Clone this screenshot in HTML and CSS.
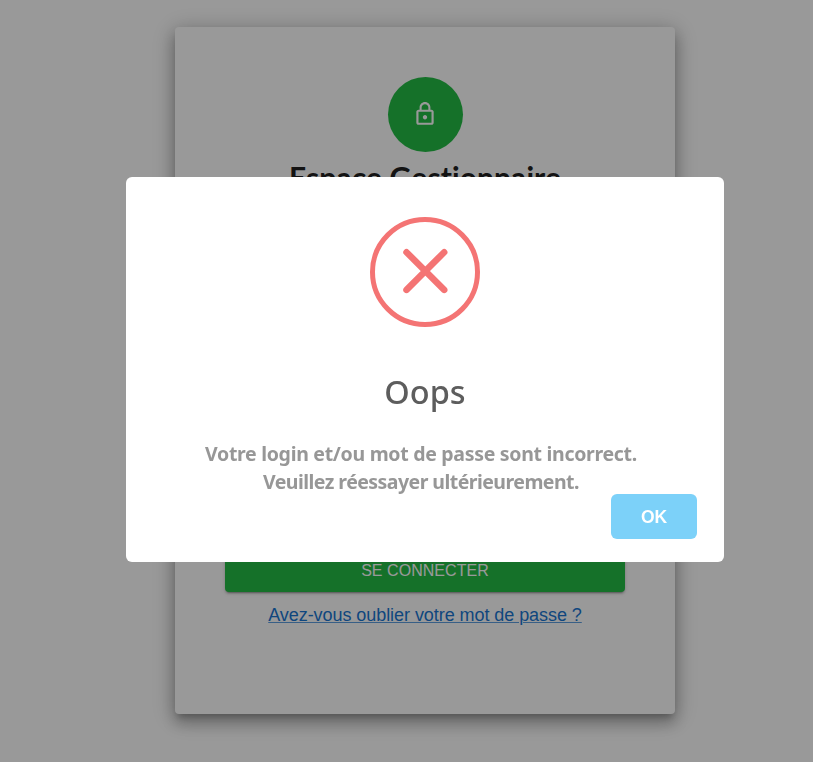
FILE: index.html
```html
<!DOCTYPE html>
<html lang="fr">
<head>
<meta charset="utf-8">
<title>Espace Gestionnaire</title>
<link rel="stylesheet" href="styles.css">
</head>
<body>
<main class="card">
  <div class="avatar">
    <svg width="26" height="26" viewBox="0 0 24 24" fill="currentColor"><path d="M12 17c1.100 0 2-.9 2-2s-.9-2-2-2-2 .9-2 2 .9 2 2 2zm6-9h-1V6c0-2.760-2.240-5-5-5S7 3.240 7 6v2H6c-1.100 0-2 .9-2 2v10c0 1.100.9 2 2 2h12c1.100 0 2-.9 2-2V10c0-1.100-.9-2-2-2zM8.900 6c0-1.710 1.390-3.100 3.100-3.100s3.100 1.390 3.100 3.100v2H8.900V6zM18 20H6V10h12v10z"/></svg>
  </div>
  <h1 class="heading">Espace Gestionnaire</h1>
  <button class="submit">SE CONNECTER</button>
  <a class="forgot" href="#">Avez-vous oublier votre mot de passe ?</a>
</main>
<div class="overlay">
  <section class="modal" role="dialog">
    <svg class="error" width="110" height="110" viewBox="0 0 110 110" fill="none" stroke="#f47474" stroke-linecap="round">
      <circle cx="55" cy="55" r="52.500" stroke-width="5"/>
      <path d="M36.500 35.200l37.700 37.700M74.200 35.200L36.500 72.900" stroke-width="6.500"/>
    </svg>
    <h2 class="title">Oops</h2>
    <p class="message"><span class="line">Votre login et/ou mot de passe sont incorrect.</span><span class="line line-retry">Veuillez réessayer ultérieurement.</span></p>
    <div class="actions"><button class="ok">OK</button></div>
  </section>
</div>
</body>
</html>
```
FILE: styles.css
```css
* { box-sizing: border-box; }
body { margin: 0; height: 762px; padding: 27px 0 0 175px; background: #fff; font-family: "Liberation Sans", Arial, sans-serif; overflow: hidden; }
.card {
  display: flex; flex-direction: column; align-items: center;
  width: 500px; height: 687px; padding: 50px;
  border-radius: 4px; background: #fff;
  box-shadow: 0 6px 6px -3px rgba(0,0,0,.2), 0 10px 14px 1px rgba(0,0,0,.14), 0 4px 18px 3px rgba(0,0,0,.12), 0 4px 24px 1px rgba(0,0,0,.14);
}
.avatar {
  display: flex; align-items: center; justify-content: center; flex: none;
  width: 75px; height: 75px; padding-bottom: 2px; border-radius: 50%; background: #23bc45; color: #fff;
}
.heading { margin: 5px 0 0; font: 700 30px/40px Lato, sans-serif; font-variant-ligatures: none; letter-spacing: .1px; color: #212121; white-space: nowrap; }
.submit {
  width: 400px; height: 42px; margin-top: 353px; padding: 0; border: 0; border-radius: 4px;
  background: #23bc45; color: #fff; font: 16px "Liberation Sans", Arial, sans-serif; letter-spacing: .05px;
  box-shadow: 0 3px 1px -2px rgba(0,0,0,.2), 0 2px 2px rgba(0,0,0,.14), 0 1px 5px rgba(0,0,0,.12);
}
.forgot {
  margin-top: 12px; color: #1976d2; font-size: 18px; line-height: 22px; letter-spacing: -.06px; white-space: nowrap;
  text-decoration: underline rgba(25,118,210,.7) 1px; text-underline-offset: 1px;
}
.overlay { position: fixed; inset: 0; padding: 177px 0 0 126px; background: rgba(0,0,0,.4); }
.modal {
  display: flex; flex-direction: column; align-items: center;
  width: 598px; height: 385px; padding-top: 40px; border-radius: 6px; background: #fff;
}
.error { flex: none; }
.title { margin: 41px 0 0; font: 500 32.500px/48px "Noto Sans", sans-serif; color: #5d5d5d; }
.message { margin: 24px 0 0; padding-right: 8px; font: 700 19.500px/28px "Noto Sans", sans-serif; letter-spacing: -.3px; color: #979797; text-align: center; white-space: nowrap; }
.line { display: block; }
.line-retry { letter-spacing: -.54px; }
.actions { display: flex; align-self: stretch; justify-content: flex-end; margin-top: -2px; padding-right: 27px; }
.ok {
  width: 86px; height: 45px; padding: 1px 0 0; border: 0; border-radius: 6px;
  background: #7cd1f9; color: #fff; font: 700 17.500px "Liberation Sans", Arial, sans-serif;
}
```
